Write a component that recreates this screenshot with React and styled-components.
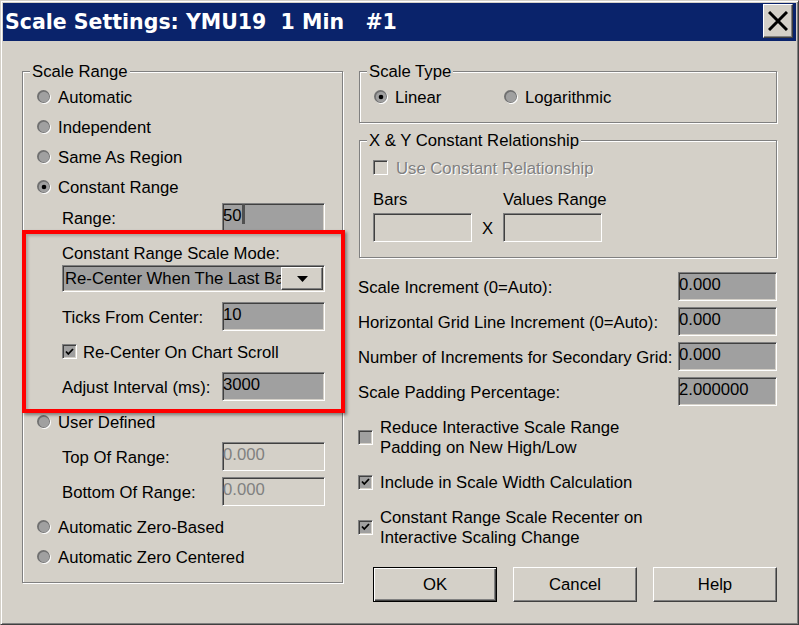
import React from 'react';
import styled, { createGlobalStyle, css } from 'styled-components';

const FACE = '#d4d0c8';
const FIELD = '#a0a0a0';

const GlobalStyle = createGlobalStyle`
  html, body { margin: 0; padding: 0; background: ${FACE}; }
  body { font-family: "Liberation Sans", Arial, sans-serif; }
  *, *::before, *::after { box-sizing: border-box; }
`;

const sunken = css`
  border: 1px solid;
  border-color: #808080 #fff #fff #808080;
  box-shadow: inset 1px 1px 0 #404040, inset -1px -1px 0 ${FACE};
`;

const raised = css`
  border: 1px solid;
  border-color: #fff #404040 #404040 #fff;
  box-shadow: inset -1px -1px 0 #808080;
`;

const Window = styled.div`
  width: 799px;
  height: 625px;
  display: flex;
  flex-direction: column;
  background: ${FACE};
  border: 1px solid;
  border-color: ${FACE} #404040 #404040 ${FACE};
  box-shadow: inset 1px 1px 0 #fff, inset -1px -1px 0 #808080;
  padding: 2px;
  font-size: 16.7px;
  color: #000;
`;

const TitleBar = styled.div`
  flex: none;
  height: 38px;
  background: #0a236b;
  display: flex;
  align-items: flex-start;
  justify-content: space-between;
  padding: 0 3px 0 2px;
`;

const TitleText = styled.div`
  font-family: "DejaVu Sans", Verdana, sans-serif;
  font-weight: bold;
  font-size: 20.5px;
  color: #fff;
  white-space: pre;
  line-height: 38px;
`;

const CloseButton = styled.div`
  width: 30px;
  height: 34px;
  margin-top: 1px;
  background: ${FACE};
  ${raised};
  display: flex;
  align-items: center;
  justify-content: center;
`;

const Body = styled.div`
  flex: 1;
  display: grid;
  grid-template-columns: 321px 419px;
  column-gap: 15px;
  align-items: start;
  padding: 30px 19px 0 19px;
`;

const Group = styled.div`
  height: ${p => p.$h}px;
  margin-left: ${p => p.$ml || 0}px;
  border: 1px solid #808080;
  box-shadow: inset 1px 1px 0 #fff, 1px 1px 0 #fff;
  display: flex;
  flex-direction: column;
`;

const Legend = styled.div`
  align-self: flex-start;
  margin: -11px 0 1px 7px;
  padding: 1px 2px 0;
  height: 20px;
  line-height: 20px;
  background: ${FACE};
`;

const Text = styled.span`
  padding-top: 2px;
  white-space: nowrap;
`;

const Option = styled.label`
  display: flex;
  align-items: center;
  gap: 7px;
  flex: none;
  height: ${p => p.$h || 30}px;
  width: ${p => (p.$w ? `${p.$w}px` : 'auto')};
  padding-left: ${p => p.$indent ?? 0}px;
  white-space: nowrap;
`;

const OptionLine = styled.div`
  display: flex;
  padding-left: 14px;
`;

const FieldRow = styled.div`
  display: flex;
  align-items: center;
  justify-content: space-between;
  height: ${p => p.$h || 35}px;
  padding: 0 ${p => p.$pr ?? 0}px 0 ${p => p.$pl ?? 0}px;
  white-space: nowrap;
`;

const Edit = styled.div`
  flex: none;
  width: ${p => p.$w || 103}px;
  height: 29px;
  ${sunken};
  background: ${p => (p.$disabled ? FACE : FIELD)};
  color: ${p => (p.$disabled ? '#808080' : '#000')};
  padding: 2px 0 0 0;
  line-height: 20px;
  white-space: nowrap;
  overflow: hidden;
`;

const Caret = styled.span`
  display: inline-block;
  width: 3px;
  height: 21px;
  margin-top: -3px;
  vertical-align: top;
  background: #505050;
`;

const Highlight = styled.div`
  position: relative;
  display: flex;
  flex-direction: column;
  &::after {
    content: '';
    position: absolute;
    top: -3px;
    left: -1px;
    right: -3px;
    bottom: -9px;
    border: 4px solid #ff0000;
    box-shadow: 2px 2px 3px rgba(0, 0, 0, 0.4), inset 2px 2px 3px rgba(0, 0, 0, 0.2);
    pointer-events: none;
  }
`;

const PlainLabel = styled.div`
  height: ${p => p.$h}px;
  margin-top: ${p => p.$mt || 0}px;
  padding-left: ${p => p.$pl || 0}px;
  display: flex;
  align-items: center;
  white-space: nowrap;
`;

const Combo = styled.div`
  height: 27px;
  margin: 1px 17px 0 39px;
  ${sunken};
  background: ${FIELD};
  padding: 1px;
  display: flex;
`;

const ComboText = styled.div`
  flex: 1;
  min-width: 0;
  overflow: hidden;
  white-space: nowrap;
  padding: 1px 0 0 1px;
  line-height: 22px;
`;

const ComboButton = styled.div`
  flex: none;
  width: 42px;
  background: ${FACE};
  ${raised};
  display: flex;
  align-items: center;
  justify-content: center;
`;

const CheckRow = styled.div`
  display: flex;
  align-items: center;
  gap: ${p => p.$gap ?? 7}px;
  height: ${p => p.$h}px;
  padding-left: ${p => p.$pl || 0}px;
  line-height: 20px;
`;

const Box = styled.span`
  flex: none;
  width: 15px;
  height: 15px;
  ${sunken};
  background: ${p => (p.$disabled ? FACE : FIELD)};
  display: flex;
  align-items: center;
  justify-content: center;
`;

const Disabled = styled.span`
  padding-top: 2px;
  color: #808080;
  text-shadow: 1px 1px 0 #fff;
  white-space: nowrap;
`;

const RightColumn = styled.div`
  display: flex;
  flex-direction: column;
`;

const Spacer = styled.div`
  height: ${p => p.$h}px;
  flex: none;
`;

const PairGrid = styled.div`
  display: grid;
  grid-template-columns: 99px 31px 99px;
  grid-template-rows: 21px 29px;
  row-gap: 4px;
  margin-top: 4px;
  padding-left: 13px;
  align-items: center;
  white-space: nowrap;
`;

const Times = styled.div`
  text-align: center;
  padding-top: 2px;
`;

const ButtonRow = styled.div`
  display: flex;
  gap: 16px;
  margin-top: 12px;
  padding-left: 15px;
`;

const Button = styled.div`
  width: 124px;
  height: 35px;
  padding-top: 1px;
  background: ${FACE};
  display: flex;
  align-items: center;
  justify-content: center;
  ${p =>
    p.$default
      ? css`
          border: 1px solid #000;
          box-shadow: inset 1px 1px 0 #fff, inset -1px -1px 0 #404040, inset -2px -2px 0 #808080;
        `
      : raised};
`;

function RadioIcon({ checked }) {
  return (
    <svg width="14" height="14" viewBox="0 0 14 14">
      <circle cx="7.5" cy="7.5" r="6.5" fill="#fff" />
      <circle cx="6.5" cy="6.5" r="6.5" fill="#707070" />
      <circle cx="7" cy="7" r="5.2" fill={FIELD} />
      {checked && <circle cx="7" cy="7" r="2.3" fill="#000" />}
    </svg>
  );
}

function Check({ checked, disabled }) {
  return (
    <Box $disabled={disabled}>
      {checked && (
        <svg width="9" height="8" viewBox="0 0 9 8">
          <path d="M1 3.5 L3.3 6 L8 1" fill="none" stroke="#000" strokeWidth="1.8" />
        </svg>
      )}
    </Box>
  );
}

function Radio({ checked, children, h, w, indent }) {
  return (
    <Option $h={h} $w={w} $indent={indent}>
      <RadioIcon checked={checked} />
      <Text>{children}</Text>
    </Option>
  );
}

const NB = '\u00a0';

export default function App() {
  return (
    <>
      <GlobalStyle />
      <Window>
        <TitleBar>
          <TitleText>{`Scale Settings: YMU19${NB}${NB}1 Min${NB}${NB}${NB}#1`}</TitleText>
          <CloseButton>
            <svg width="20" height="20" viewBox="0 0 20 20">
              <path d="M1 1 L19 19 M19 1 L1 19" stroke="#000" strokeWidth="3" />
            </svg>
          </CloseButton>
        </TitleBar>
        <Body>
          <Group $h={512}>
            <Legend>Scale Range</Legend>
            <Radio indent={14}>Automatic</Radio>
            <Radio indent={14}>Independent</Radio>
            <Radio indent={14}>Same As Region</Radio>
            <Radio indent={14} checked>Constant Range</Radio>
            <FieldRow $h={31} $pl={39} $pr={17}>
              <Text>Range:</Text>
              <Edit>
                50<Caret />
              </Edit>
            </FieldRow>
            <Highlight>
              <PlainLabel $h={22} $mt={9} $pl={39}>
                <Text>Constant Range Scale Mode:</Text>
              </PlainLabel>
              <Combo>
                <ComboText>Re-Center When The Last Bar Moves</ComboText>
                <ComboButton>
                  <svg width="11" height="6" viewBox="0 0 11 6">
                    <polygon points="0,0 11,0 5.5,6" fill="#000" />
                  </svg>
                </ComboButton>
              </Combo>
              <Spacer $h={7} />
              <FieldRow $pl={39} $pr={17}>
                <Text>Ticks From Center:</Text>
                <Edit>10</Edit>
              </FieldRow>
              <CheckRow $h={35} $pl={39} $gap={6}>
                <Check checked />
                <Text>Re-Center On Chart Scroll</Text>
              </CheckRow>
              <FieldRow $pl={39} $pr={17}>
                <Text>Adjust Interval (ms):</Text>
                <Edit>3000</Edit>
              </FieldRow>
            </Highlight>
            <Radio indent={14} h={35}>User Defined</Radio>
            <FieldRow $pl={39} $pr={17}>
              <Text>Top Of Range:</Text>
              <Edit $disabled>0.000</Edit>
            </FieldRow>
            <FieldRow $pl={39} $pr={17}>
              <Text>Bottom Of Range:</Text>
              <Edit $disabled>0.000</Edit>
            </FieldRow>
            <Radio indent={14} h={35}>Automatic Zero-Based</Radio>
            <Radio indent={14} h={26}>Automatic Zero Centered</Radio>
          </Group>

          <RightColumn>
            <Group $h={52} $ml={1}>
              <Legend>Scale Type</Legend>
              <OptionLine>
                <Radio w={130} checked>Linear</Radio>
                <Radio>Logarithmic</Radio>
              </OptionLine>
            </Group>
            <Spacer $h={17} />
            <Group $h={118} $ml={1}>
              <Legend>X &amp; Y Constant Relationship</Legend>
              <CheckRow $h={33} $pl={13} $gap={8}>
                <Check disabled />
                <Disabled>Use Constant Relationship</Disabled>
              </CheckRow>
              <PairGrid>
                <Text>Bars</Text>
                <span />
                <Text>Values Range</Text>
                <Edit $w={99} $disabled />
                <Times>X</Times>
                <Edit $w={99} $disabled />
              </PairGrid>
            </Group>
            <Spacer $h={11} />
            <FieldRow>
              <Text>Scale Increment (0=Auto):</Text>
              <Edit $w={99}>0.000</Edit>
            </FieldRow>
            <FieldRow>
              <Text>Horizontal Grid Line Increment (0=Auto):</Text>
              <Edit $w={99}>0.000</Edit>
            </FieldRow>
            <FieldRow>
              <Text>Number of Increments for Secondary Grid:</Text>
              <Edit $w={99}>0.000</Edit>
            </FieldRow>
            <FieldRow>
              <Text>Scale Padding Percentage:</Text>
              <Edit $w={99}>2.000000</Edit>
            </FieldRow>
            <CheckRow $h={56}>
              <Check />
              <Text>
                Reduce Interactive Scale Range
                <br />
                Padding on New High/Low
              </Text>
            </CheckRow>
            <CheckRow $h={34}>
              <Check checked />
              <Text>Include in Scale Width Calculation</Text>
            </CheckRow>
            <CheckRow $h={56}>
              <Check checked />
              <Text>
                Constant Range Scale Recenter on
                <br />
                Interactive Scaling Change
              </Text>
            </CheckRow>
            <ButtonRow>
              <Button $default>OK</Button>
              <Button>Cancel</Button>
              <Button>Help</Button>
            </ButtonRow>
          </RightColumn>
        </Body>
      </Window>
    </>
  );
}
